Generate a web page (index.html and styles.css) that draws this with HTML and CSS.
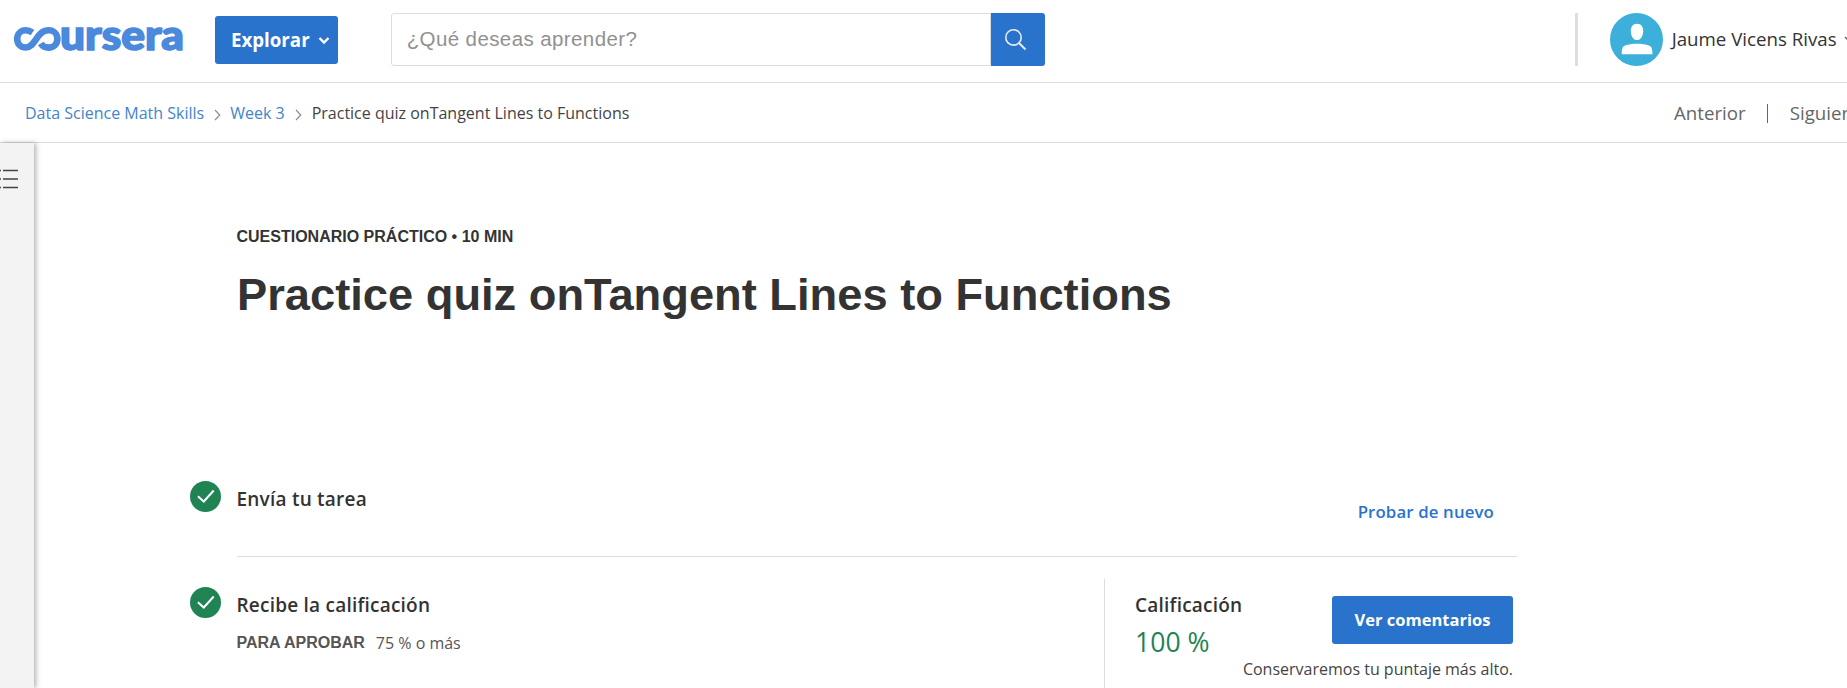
FILE: index.html
```html
<!DOCTYPE html>
<html lang="es">
<head>
<meta charset="utf-8">
<title>Practice quiz onTangent Lines to Functions | Coursera</title>
<link rel="stylesheet" href="styles.css">
</head>
<body>
<header class="topbar">
  <svg class="logo" width="172" height="28" viewBox="0 0 172 28" role="img" aria-label="coursera">
    <path d="M18.500 6.600C16 4.900 14 4.300 11.800 4.300C6.800 4.300 3.200 8 3.200 12.900C3.200 18 7 21.500 11.800 21.500C21.500 21.500 22.500 4.300 34.500 4.300C39.600 4.300 43.400 8 43.400 12.900C43.400 18 39.500 21.600 34.500 21.600C31.200 21.600 28.500 20.200 26.700 17.500" fill="none" stroke="#4a89dc" stroke-width="6.6"/>
    <text class="logo-text" x="46" y="23.500" textLength="124" lengthAdjust="spacingAndGlyphs">ursera</text>
  </svg>
  <button class="explore"><span>Explorar</span>
    <svg width="12" height="9" viewBox="0 0 12 9"><path d="M1.500 2L6 6.500L10.500 2" fill="none" stroke="#fff" stroke-width="2.400"/></svg>
  </button>
  <div class="search">
    <div class="search-input">¿Qué deseas aprender?</div>
    <button class="search-button" aria-label="Buscar">
      <svg width="23" height="23" viewBox="0 0 23 23" fill="none" stroke="#e6ebf2"><circle cx="8.500" cy="9.400" r="7.700" stroke-width="1.600"/><path d="M14 15L20.500 21.500" stroke-width="2"/></svg>
    </button>
  </div>
  <div class="account">
    <svg class="avatar" width="53" height="53" viewBox="0 0 53 53"><circle cx="26.500" cy="26.500" r="26.500" fill="#3cafda"/><path d="M27 10.700c4 0 6.200 2.800 6.200 7.200c0 5-2.500 9.100-6.200 9.100s-6.200-4.100-6.200-9.100c0-4.400 2.200-7.200 6.200-7.200zM11.700 41.200c0-5 .6-7.700 3.400-8.700c3-1.200 7.300-1.700 11.900-1.700s8.900.5 11.900 1.700c2.800 1 3.500 3.700 3.600 8.700z" fill="#fff"/></svg>
    <span class="user">Jaume Vicens Rivas</span>
    <svg class="caret" width="10" height="7" viewBox="0 0 10 7"><path d="M1 1L5 5L9 1" fill="none" stroke="#666" stroke-width="1.400"/></svg>
  </div>
</header>
<nav class="crumbs">
  <a class="crumb-course">Data Science Math Skills</a>
  <svg class="sep" width="7" height="12" viewBox="0 0 7 12"><path d="M1 1L5.800 6L1 11" fill="none" stroke="#888" stroke-width="1.100"/></svg>
  <a class="crumb-week">Week 3</a>
  <svg class="sep" width="7" height="12" viewBox="0 0 7 12"><path d="M1 1L5.800 6L1 11" fill="none" stroke="#888" stroke-width="1.100"/></svg>
  <span class="crumb-here">Practice quiz onTangent Lines to Functions</span>
  <div class="pager"><span class="prev">Anterior</span><span class="next">Siguiente</span></div>
</nav>
<div class="body">
  <aside class="rail">
    <svg width="18" height="22" viewBox="0 0 18 22" stroke="#444" stroke-width="1.500"><path d="M0 2.500h1M3 2.500h15M0 11h1M3 11h15M0 19.500h1M3 19.500h15"/></svg>
  </aside>
  <main class="content">
    <div class="kicker">CUESTIONARIO PRÁCTICO • 10 MIN</div>
    <h1 class="title">Practice quiz onTangent Lines to Functions</h1>
    <section class="step submit">
      <svg class="check" width="31" height="31" viewBox="0 0 31 31"><circle cx="15.500" cy="15.500" r="15.500" fill="#1f8354"/><path d="M7.900 15.300L13.800 20.500L23.700 9.500" fill="none" stroke="#fff" stroke-width="2"/></svg>
      <div class="step-body"><h2 class="step-title">Envía tu tarea</h2></div>
      <a class="retry">Probar de nuevo</a>
    </section>
    <section class="step grade">
      <svg class="check" width="31" height="31" viewBox="0 0 31 31"><circle cx="15.500" cy="15.500" r="15.500" fill="#1f8354"/><path d="M7.900 15.300L13.800 20.500L23.700 9.500" fill="none" stroke="#fff" stroke-width="2"/></svg>
      <div class="step-body">
        <h2 class="step-title">Recibe la calificación</h2>
        <div class="pass"><b class="pass-label">PARA APROBAR</b><span class="pass-value">75 % o más</span></div>
      </div>
      <div class="result">
        <div class="result-row">
          <div><div class="grade-label">Calificación</div><div class="grade-value">100 %</div></div>
          <button class="feedback">Ver comentarios</button>
        </div>
        <div class="note">Conservaremos tu puntaje más alto.</div>
      </div>
    </section>
  </main>
</div>
</body>
</html>
```
FILE: styles.css
```css
* { box-sizing: border-box; }
body { margin: 0; height: 688px; overflow: hidden; background: #fff; color: #333; font-family: "Open Sans", "Noto Sans", sans-serif; white-space: nowrap; }
button { border: 0; padding: 0; color: #fff; background: #2a73cc; font-family: inherit; }
svg { display: block; flex: none; }
h1, h2 { margin: 0; }

.topbar { display: flex; height: 83px; border-bottom: 1px solid #ddd; }
.logo { margin: 26px 0 0 14px; overflow: visible; }
.logo-text { font: 900 41px Lato, sans-serif; fill: #4a89dc; stroke: #4a89dc; stroke-width: 1.6px; }
.explore { display: flex; align-items: center; gap: 8px; width: 123px; height: 48px; margin: 16px 0 0 29px; padding: 0 8px 0 16px; border-radius: 3px; font-size: 18.700px; font-weight: 700; }
.explore span { margin-top: -1px; }
.search { display: flex; width: 654px; height: 53px; margin: 13px 0 0 53px; }
.search-input { width: 600px; padding-left: 15px; border: 1px solid #ddd; border-radius: 3px 0 0 3px; font: 20.500px/50px "Liberation Sans", Arial, sans-serif; letter-spacing: .4px; color: #919191; }
.search-button { display: flex; width: 54px; padding: 15px 0 0 14px; border-radius: 0 3px 3px 0; }
.account { display: flex; height: 53px; margin: 13px 0 0 530px; border-left: 3px solid #ddd; }
.avatar { margin-left: 32px; }
.user { margin-left: 9px; font-size: 18.700px; line-height: 52px; }
.caret { margin: 23px 0 0 7px; }

.crumbs { display: flex; height: 60px; padding-left: 25px; border-bottom: 1px solid #ddd; font-size: 16px; line-height: 60px; }
.crumbs a { color: #4285c8; }
.sep { margin: 26px 10px 0 10px; }
.crumb-here { color: #444; }
.crumb-week { margin-left: -1px; }
.pager { display: flex; margin-left: auto; width: 173px; font-size: 18.700px; color: #666; }
.next { position: relative; margin-left: 44px; }
.next::before { content: ""; position: absolute; left: -23px; top: 21px; width: 1px; height: 19px; background: #666; }

.body { display: flex; height: 545px; }
.rail { flex: none; width: 34px; padding-top: 25px; background: #f3f3f3; box-shadow: 2px 0 5px rgba(0,0,0,.3); }
.content { width: 1483px; padding-left: 156px; }
.kicker { margin: 83px 0 0 46.500px; font: 700 16px/22px "Liberation Sans", Arial, sans-serif; }
.title { margin: 21px 0 0 47px; font: 700 45.280px/52px "Liberation Sans", Arial, sans-serif; }
.step { display: flex; position: relative; }
.check { margin-right: 15.500px; }
.step-body { flex: 1; }
.step-title { font-size: 19px; font-weight: 600; line-height: 26px; letter-spacing: .22px; }
.submit { height: 76px; margin-top: 160px; }
.submit::after { content: ""; position: absolute; left: 47px; right: 0; bottom: 0; height: 1px; background: #ddd; }
.submit .step-title, .grade .step-title { margin-top: 5px; }
.retry { margin: 19px 23px 0 0; color: #2a73cc; font-size: 16.800px; font-weight: 600; line-height: 24px; letter-spacing: .14px; }
.grade { margin-top: 30px; }
.pass { display: flex; gap: 11px; margin-top: 13px; font-size: 16px; line-height: 24px; color: #555; }
.pass-label { font-family: "Liberation Sans", Arial, sans-serif; }
.result { width: 413px; height: 120px; margin-top: -8px; padding: 13px 4px 0 30px; border-left: 1px solid #ddd; }
.result-row { display: flex; justify-content: space-between; height: 64px; }
.grade-label { font-size: 19px; font-weight: 600; line-height: 26px; letter-spacing: .22px; }
.grade-value { margin-top: 5px; color: #1f8354; font-size: 26.600px; line-height: 38px; }
.feedback { width: 181px; height: 48px; margin-top: 4px; padding-bottom: 1px; border-radius: 3px; font-size: 16.500px; font-weight: 700; }
.note { margin-top: 1px; text-align: right; font-size: 16px; line-height: 24px; color: #444; }
```
